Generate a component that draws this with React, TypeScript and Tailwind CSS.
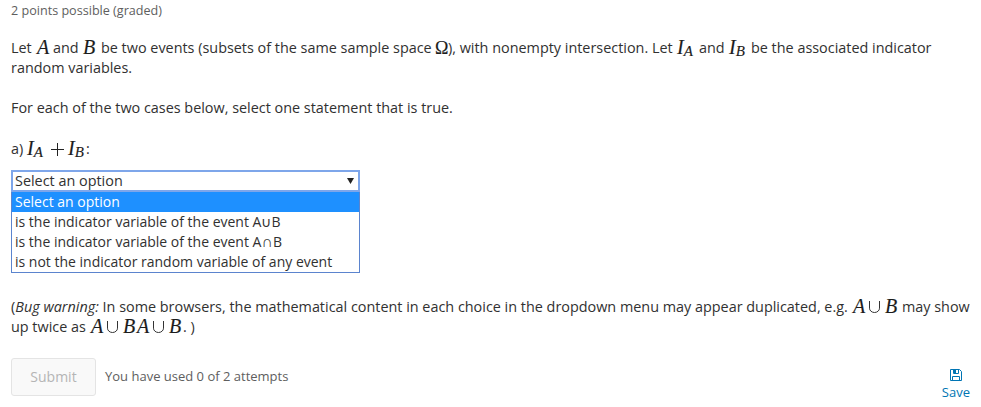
import type { ReactNode } from "react";

function Run({ className = "", children }: { className?: string; children: ReactNode }) {
  return <span className={`shrink-0 whitespace-pre ${className}`}>{children}</span>;
}

function M({ className = "", children }: { className?: string; children: ReactNode }) {
  return (
    <span className={`shrink-0 translate-y-px whitespace-pre font-['Liberation_Serif',serif] text-[20px] leading-4 italic text-[#1c1c1c] [-webkit-text-stroke:0.15px_#1c1c1c] ${className}`}>
      {children}
    </span>
  );
}

function Sub({ children }: { children: ReactNode }) {
  return <span className="relative top-[2px] text-[15px] leading-none">{children}</span>;
}

function Cup({ className = "" }: { className?: string }) {
  return (
    <svg className={`h-[12px] w-[12px] shrink-0 translate-y-px ${className}`} viewBox="0 0 12 12" fill="none" stroke="#333" strokeWidth="1">
      <path d="M.5 0V7.2A5 4.3 0 0 0 10.5 7.2V0" />
    </svg>
  );
}

function Plus() {
  return (
    <svg className="mr-[4px] ml-px h-[13px] w-[13px] shrink-0 translate-y-[2px]" viewBox="0 0 13 13" stroke="#222" strokeWidth="1">
      <path d="M0 6.5H13M6.5 0V13" />
    </svg>
  );
}

function SaveIcon() {
  return (
    <svg className="mb-[2px] h-[12px] w-[12px]" viewBox="0 0 12 12" fill="none" stroke="#0075b4" strokeWidth="1">
      <path d="M.5.5H9.5L11.5 2.5V11.5H.5ZM3.5 .5V4.5H8.5V.5M2.5 11.5V7.5H9.5V11.5" />
      <path d="M4 1H6V4H4Z" fill="#0075b4" stroke="none" />
    </svg>
  );
}

export default function App() {
  return (
    <main className="h-[407px] w-[981px] overflow-hidden bg-white pl-[11px] font-['Open_Sans','Noto_Sans',sans-serif] text-[14.4px] leading-5 text-[#313131]">
      <div className="h-[38px] pt-px text-[12.6px] text-[#5e5e5e]">2 points possible (graded)</div>
      <p className="flex h-5 items-baseline">
        <Run className="w-[26px]">Let</Run>
        <M className="w-[16px]">A</M>
        <Run className="w-[30px]">and</Run>
        <M className="w-[18px]">B</M>
        <Run className="w-[334px]">be two events (subsets of the same sample space</Run>
        <M className="w-[13px] text-[18px]! not-italic!">Ω</M>
        <Run className="w-[229px]">), with nonempty intersection. Let</Run>
        <M className="w-[22px]">I<Sub>A</Sub></M>
        <Run className="w-[30px]">and</Run>
        <M className="w-[22px]">I<Sub>B</Sub></M>
        <Run>be the associated indicator</Run>
      </p>
      <p className="h-5">random variables.</p>
      <p className="mt-5 h-5">For each of the two cases below, select one statement that is true.</p>
      <p className="mt-[21px] flex h-5 items-baseline">
        <Run className="w-[16px]">a)</Run>
        <M className="w-[23px]">I<Sub>A</Sub></M>
        <Plus />
        <M className="w-[18px]">I<Sub>B</Sub></M>
        <Run>:</Run>
      </p>
      <div className="mt-[11px] w-[349px]">
        <div className="flex h-[22px] items-center justify-between border-2 border-[#7ea6ea] pr-[4px] pl-[2px]">
          <span>Select an option</span>
          <svg className="h-[6px] w-[7px]" viewBox="0 0 7 6"><path d="M0 0H7L3.5 6Z" fill="#222" /></svg>
        </div>
        <div className="h-[81px] border border-t-0 border-[#5b84ce] text-[14px]">
          <div className="h-5 bg-[#1e90ff] pl-[3px] text-white">Select an option</div>
          <div className="h-5 pl-[3px]">is the indicator variable of the event A∪B</div>
          <div className="h-5 pl-[3px]">is the indicator variable of the event A<span className="text-[16px] leading-none">∩</span>B</div>
          <div className="h-5 pl-[3px]">is not the indicator random variable of any event</div>
        </div>
      </div>
      <p className="mt-[24px] flex h-5 items-baseline">
        <Run className="w-[842px]">(<i>Bug warning:</i> In some browsers, the mathematical content in each choice in the dropdown menu may appear duplicated, e.g.</Run>
        <M className="w-[16px]">A</M>
        <Cup className="mr-[4px]" />
        <M className="w-[17px]">B</M>
        <Run>may show</Run>
      </p>
      <p className="flex h-5 items-baseline">
        <Run className="w-[80px]">up twice as</Run>
        <M className="w-[16px]">A</M>
        <Cup className="mr-[4px]" />
        <M className="w-[14px]">B</M>
        <M className="w-[16px]">A</M>
        <Cup className="mr-[4px]" />
        <M className="w-[14px]">B</M>
        <Run>. )</Run>
      </p>
      <div className="mt-[21px] flex h-[42px] items-start">
        <button className="h-[38px] w-[85px] rounded-[3px] border border-[#e4e4e4] bg-[#f9f9f9] text-[14px] text-[#b5b5b5]">Submit</button>
        <span className="mt-[8px] ml-[9px] text-[13px] text-[#5e5e5e]">You have used 0 of 2 attempts</span>
        <button className="mt-[11px] mr-[11px] ml-auto flex flex-col items-center text-[13px] leading-[18px] text-[#0075b4]">
          <SaveIcon />
          <span>Save</span>
        </button>
      </div>
    </main>
  );
}
